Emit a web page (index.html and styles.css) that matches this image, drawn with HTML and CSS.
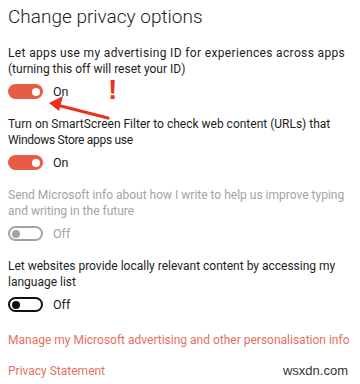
FILE: index.html
```html
<!DOCTYPE html>
<html>
<head>
<meta charset="utf-8">
<link rel="stylesheet" href="styles.css">
</head>
<body>
<main class="page">
  <h1 class="title">Change privacy options</h1>

  <section class="setting first">
    <p class="label"><span class="wide">Let apps use my advertising ID for experiences across apps</span><br>(turning this off will reset your ID)</p>
    <div class="row"><span class="toggle on"><span class="knob"></span></span><span class="state">On</span></div>
    <span class="bang">!</span>
    <svg class="arrow" width="80" height="32" viewBox="0 0 80 32">
      <line x1="63" y1="25" x2="12" y2="12" stroke="#e8321e" stroke-width="3.2" stroke-linecap="round"/>
      <polygon points="4,10 18,3 14,18" fill="#e8321e"/>
    </svg>
  </section>

  <section class="setting">
    <p class="label">Turn on SmartScreen Filter to check web content (URLs) that<br><span class="tight">Windows Store apps use</span></p>
    <div class="row"><span class="toggle on"><span class="knob"></span></span><span class="state">On</span></div>
  </section>

  <section class="setting disabled">
    <p class="label">Send Microsoft info about how I write to help us improve typing<br>and writing in the future</p>
    <div class="row"><span class="toggle off"><span class="knob"></span></span><span class="state">Off</span></div>
  </section>

  <section class="setting">
    <p class="label">Let websites provide locally relevant content by accessing my<br>language list</p>
    <div class="row"><span class="toggle off"><span class="knob"></span></span><span class="state">Off</span></div>
  </section>

  <a class="link first-link">Manage my Microsoft advertising and other personalisation info</a>
  <a class="link">Privacy Statement</a>
</main>
<div class="watermark">wsxdn.com</div>
</body>
</html>
```
FILE: styles.css
```css
html, body {
  margin: 0;
  padding: 0;
  background: #fff;
}
body {
  width: 360px;
  height: 384px;
  overflow: hidden;
  position: relative;
  font-family: Roboto, "Liberation Sans", sans-serif;
  color: #1d1d1d;
}
.page {
  padding: 4px 0 0 8px;
  display: flex;
  flex-direction: column;
}
.title {
  margin: 0;
  font-size: 19px;
  font-weight: 300;
  line-height: 26px;
  color: #222;
}
.setting {
  position: relative;
  margin-top: 18px;
}
.setting.first {
  margin-top: 16px;
}
.label {
  margin: 0;
  font-size: 12px;
  line-height: 15.5px;
  white-space: nowrap;
}
.wide {
  letter-spacing: 0.35px;
}
.tight {
  letter-spacing: -0.3px;
}
.row {
  display: flex;
  align-items: center;
  gap: 10px;
  margin-top: 7px;
  height: 15px;
}
.toggle {
  box-sizing: border-box;
  width: 35px;
  height: 15px;
  border-radius: 8px;
  display: flex;
  align-items: center;
  padding: 0 3px;
}
.toggle .knob {
  width: 8px;
  height: 8px;
  border-radius: 50%;
}
.toggle.on {
  background: #e65c47;
  justify-content: flex-end;
}
.toggle.on .knob {
  background: #fff;
}
.toggle.off {
  border: 2px solid #111;
  justify-content: flex-start;
  padding: 0 2px;
}
.toggle.off .knob {
  background: #111;
}
.state {
  font-size: 12.5px;
  line-height: 15px;
}
.disabled .label, .disabled .state {
  color: #a3a3a3;
}
.disabled .toggle.off {
  border-color: #a3a3a3;
}
.disabled .toggle.off .knob {
  background: #a3a3a3;
}
.bang {
  position: absolute;
  left: 100px;
  top: 30px;
  font-family: "Liberation Sans", sans-serif;
  font-weight: 700;
  font-size: 28px;
  line-height: 28px;
  color: #e8321e;
}
.arrow {
  position: absolute;
  left: 37px;
  top: 47px;
}
.link {
  font-size: 12px;
  line-height: 16px;
  color: #e8705f;
  white-space: nowrap;
}
.first-link {
  margin-top: 20px;
}
.link + .link {
  margin-top: 15px;
}
.watermark {
  position: absolute;
  right: 12px;
  bottom: 6px;
  font-family: "Liberation Sans", sans-serif;
  font-size: 13px;
  color: #333;
}
```
